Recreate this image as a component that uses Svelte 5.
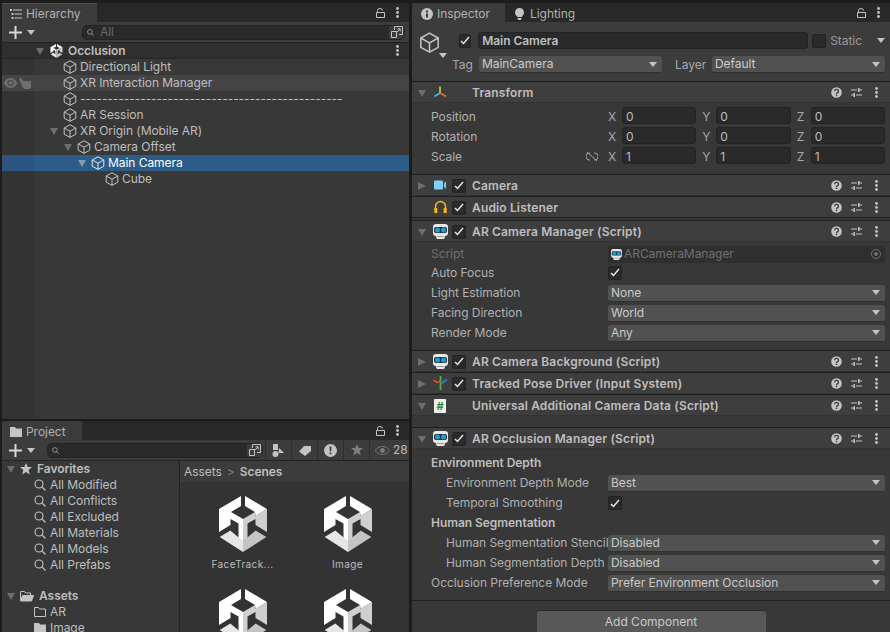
<script>
	const tree = [
		{ name: 'Directional Light', depth: 0 },
		{ name: 'XR Interaction Manager', depth: 0, hover: true },
		{ name: '------------------------------------------------', depth: 0 },
		{ name: 'AR Session', depth: 0 },
		{ name: 'XR Origin (Mobile AR)', depth: 0, open: true },
		{ name: 'Camera Offset', depth: 1, open: true },
		{ name: 'Main Camera', depth: 2, open: true, selected: true },
		{ name: 'Cube', depth: 3 }
	];
	const favorites = ['All Modified', 'All Conflicts', 'All Excluded', 'All Materials', 'All Models', 'All Prefabs'];
	const scenes = ['FaceTrack...', 'Image', '', ''];
	const vectors = [
		{ label: 'Position', value: '0' },
		{ label: 'Rotation', value: '0' },
		{ label: 'Scale', value: '1', link: true }
	];
</script>

{#snippet cube(size = 14, color = '#c4c4c4')}
	<svg class="ico" width={size} height={size} viewBox="0 0 14 14" fill="none" stroke={color} stroke-width="1">
		<path d="M7 .8 12.8 4v6.2L7 13.4 1.2 10.2V4Z M1.2 4 7 7.2 12.8 4 M7 7.2v6.2" />
	</svg>
{/snippet}

{#snippet unity(w = 48, h = 56)}
	<svg class="ico" width={w} height={h} viewBox="0 0 48 56">
		<path fill="#fff" d="M22 0v10l-10 6 12 7v22h-4.500V27.500L11.500 23v6L0 36V13Z" />
		<path fill="#fff" d="M26 0 48 13 36.500 20 36 16 26 10Z" />
		<path fill="#cfcfcf" d="M48 13v23l-11.500-7v-6l-8 4.500V45H24V23l12-7v4Z" />
		<path fill="#e6e6e6" d="M.7 41 11.300 34.500 24 45v11Z" />
		<path fill="#c4c4c4" d="M47.300 41 36.700 34.500 24 45v11Z" />
	</svg>
{/snippet}

{#snippet triangle(open = true, color = '#6e6e6e')}
	<svg class="ico" width="8" height="8" viewBox="0 0 8 8" fill={color}>
		{#if open}<path d="M0 1h8L4 8Z" />{:else}<path d="M0 0l8 4-8 4Z" />{/if}
	</svg>
{/snippet}

{#snippet caret()}
	<svg class="ico" width="8" height="5" viewBox="0 0 8 5" fill="#c4c4c4"><path d="M0 0h8L4 5Z" /></svg>
{/snippet}

{#snippet lock()}
	<svg class="ico" width="9" height="10" viewBox="0 0 9 10" fill="none" stroke="#c4c4c4"><path d="M1.500 4.500V2.500a2.500 2 0 0 1 5 0 M.5 4.500h8v5h-8Z" /></svg>
{/snippet}

{#snippet dots()}
	<svg class="ico" width="3" height="11" viewBox="0 0 3 11" fill="#c4c4c4"><circle cx="1.500" cy="1.500" r="1.400" /><circle cx="1.500" cy="5.500" r="1.400" /><circle cx="1.500" cy="9.500" r="1.400" /></svg>
{/snippet}

{#snippet plusBtn()}
	<div class="plus">
		<svg class="ico" width="13" height="13" viewBox="0 0 13 13" fill="#d8d8d8"><path d="M5.500 0h2v5.500H13v2H7.500V13h-2V7.500H0v-2h5.500Z" /></svg>
		{@render caret()}
	</div>
{/snippet}

{#snippet glass(size = 12, color = '#c4c4c4')}
	<svg class="ico" width={size} height={size} viewBox="0 0 12 12" fill="none" stroke={color} stroke-width="1.100"><circle cx="5" cy="5" r="4" /><path d="M8 8l3.500 3.500" /></svg>
{/snippet}

{#snippet searchEnd()}
	<span class="search-end">
		<svg class="ico" width="12" height="12" viewBox="0 0 12 12" fill="none" stroke="#c4c4c4"><path d="M3.500 4V.5h8v8H8 M.5 5.500h5v6h-5Z M5 7l4-4 M6.500 2.800H9.200V5.500" /></svg>
	</span>
{/snippet}

{#snippet check()}
	<span class="check">
		<svg class="ico" width="10" height="9" viewBox="0 0 10 9" fill="none" stroke="#e6e6e6" stroke-width="1.500"><path d="M1 5l2.500 2.500L9 1" /></svg>
	</span>
{/snippet}

{#snippet robot(size = 15)}
	<svg class="ico" width={size} height={size} viewBox="0 0 15 15">
		<path fill="#e8e8e8" d="M3 0h9a3 3 0 0 1 3 3v6a3 3 0 0 1-3 3v1l-1 2H4l-1-2v-1a3 3 0 0 1-3-3V3a3 3 0 0 1 3-3Z" />
		<rect fill="#26323a" x="1" y="3" width="13" height="6" rx="2" />
		<circle fill="#18a0d8" cx="4.500" cy="6" r="2.500" />
		<circle fill="#18a0d8" cx="10.500" cy="6" r="2.500" />
		<path fill="#9a9a9a" d="M4 12h7v1H4Z" />
	</svg>
{/snippet}

{#snippet dropdown(value)}
	<div class="dropdown"><span>{value}</span>{@render caret()}</div>
{/snippet}

{#snippet compHead(title, open, icon, toggle = true, showArrow = true, tight = false)}
	<div class="comp-head" class:tight>
		<span class="arrow">{#if showArrow}{@render triangle(open)}{/if}</span>
		<span class="comp-icon">{@render icon()}</span>
		<span class="comp-check">{#if toggle}{@render check()}{/if}</span>
		<span class="comp-title">{title}</span>
		<span class="comp-tools">
			<svg class="ico" width="11" height="11" viewBox="0 0 11 11"><circle cx="5.500" cy="5.500" r="5.300" fill="#c4c4c4" /><path d="M3.500 4.200a2 1.800 0 1 1 2.800 1.700c-.6.300-.8.600-.8 1.100" fill="none" stroke="#383838" stroke-width="1.300" /><rect x="4.800" y="7.700" width="1.400" height="1.400" fill="#383838" /></svg>
			<svg class="ico sliders" width="11" height="11" viewBox="0 0 11 11" fill="#c4c4c4"><path d="M0 2.500h6v1H0Z M7 1h1.500v1.500H11v1H8.500V5H7Z M0 7.500h2.500V6H4v4H2.500V8.500H0Z M5 7.500h6v1H5Z" /></svg>
			{@render dots()}
		</span>
	</div>
{/snippet}

{#snippet iconTransform()}
	<svg class="ico" width="15" height="15" viewBox="0 0 15 15" fill="none" stroke-width="1.800"><path d="M7 8V1.500" stroke="#a6d32a" /><path d="M7 8 1.500 11.500" stroke="#3fb6e8" /><path d="M7 8l6 3.500" stroke="#f2673a" /></svg>
{/snippet}
{#snippet iconCamera()}
	<svg class="ico" width="15" height="15" viewBox="0 0 15 15" fill="#7fd0fb"><rect x="1" y="2.500" width="9" height="9" rx="1" /><path d="M11 5.500 13 3v8l-2-2.500Z" /></svg>
{/snippet}
{#snippet iconAudio()}
	<svg class="ico" width="15" height="15" viewBox="0 0 15 15" fill="none" stroke="#f7b51b" stroke-width="1.500"><path d="M2.500 9V6.500a5 5 0 0 1 10 0V9" /><path d="M2.800 8v5 M12.200 8v5" stroke-width="3" /></svg>
{/snippet}
{#snippet iconPose()}
	<svg class="ico" width="15" height="15" viewBox="0 0 15 15" fill="none" stroke-width="1.700"><path d="M7.500 0v14" stroke="#4cb82c" /><path d="M.5 4 4 6.500 7.500 5" stroke="#f0402c" /><path d="M7.500 8 14 3.500" stroke="#2a84e8" /></svg>
{/snippet}
{#snippet iconHash()}
	<span class="hash-doc">#</span>
{/snippet}
{#snippet iconRobot()}
	{@render robot()}
{/snippet}

<div class="editor">
	<div class="left">
		<section class="panel hierarchy">
			<div class="tabs">
				<div class="tab active blue">
					<svg class="ico" width="12" height="10" viewBox="0 0 12 10" fill="#c4c4c4"><path d="M0 0h2v2H0Z M3 .5h9v1H3Z M1.500 4h2v2h-2Z M4.500 4.500H12v1H4.500Z M1.500 8h2v2h-2Z M4.500 8.500H12v1H4.500Z" /></svg>
					<span>Hierarchy</span>
				</div>
				<div class="tab-tools">{@render lock()}{@render dots()}</div>
			</div>
			<div class="toolbar">
				{@render plusBtn()}
				<div class="search wide">
					<span class="search-glass">{@render glass(7)}</span>
					<span class="hint">All</span>
					{@render searchEnd()}
				</div>
			</div>
			<div class="scene-row">
				<span class="scene-arrow">{@render triangle(true)}</span>
				{@render unity(13, 14)}
				<b>Occlusion</b>
				<span class="scene-dots">{@render dots()}</span>
			</div>
			<div class="tree">
				{#each tree as row}
					<div class="tree-row" class:selected={row.selected} class:hover={row.hover}>
						<span class="gutter">
							{#if row.hover}
								<svg class="ico" width="15" height="10" viewBox="0 0 15 10"><path fill="#6e6e6e" d="M.5 5C3 1 5 0 7.500 0S12 1 14.500 5C12 9 10 10 7.500 10S3 9 .5 5Z" /><circle cx="7.500" cy="5" r="3" fill="#444" /><circle cx="7.500" cy="5" r="2" fill="#6e6e6e" /></svg>
								<svg class="ico" width="12" height="11" viewBox="0 0 12 11" fill="#6e6e6e"><path d="M0 0h1.500l3 3H11a1 1 0 0 1 1 1v5l-1 2H5L3 8 .5 2Z" /></svg>
							{/if}
						</span>
						<span class="tree-arrow" style="margin-left:{16 + row.depth * 14}px">
							{#if row.open}{@render triangle(true, row.selected ? '#7f9cb8' : '#6e6e6e')}{/if}
						</span>
						{@render cube(14, row.selected ? '#e0e8ee' : '#c4c4c4')}
						<span class="tree-name">{row.name}</span>
					</div>
				{/each}
			</div>
		</section>

		<section class="panel project">
			<div class="tabs">
				<div class="tab active">
					<svg class="ico" width="12" height="10" viewBox="0 0 12 10" fill="#c4c4c4"><path d="M0 0h5l1 1.500h6V10H0Z" /></svg>
					<span>Project</span>
				</div>
				<div class="tab-tools">{@render lock()}{@render dots()}</div>
			</div>
			<div class="toolbar">
				{@render plusBtn()}
				<div class="search narrow">
					<span class="search-glass">{@render glass(7)}</span>
					{@render searchEnd()}
				</div>
				<div class="tool-btn">
					<svg class="ico" width="13" height="13" viewBox="0 0 13 13" fill="#c4c4c4"><rect x="1" y="0" width="5" height="6" /><circle cx="3.500" cy="10" r="3" /><path d="M7 4l5 5H6.500Z" /></svg>
				</div>
				<div class="tool-btn">
					<svg class="ico" width="12" height="11" viewBox="0 0 12 11" fill="#c4c4c4"><path d="M5 1h7v5L6 11 0 6.500Z" /></svg>
				</div>
				<div class="tool-btn">
					<svg class="ico" width="13" height="13" viewBox="0 0 13 13"><circle cx="6.500" cy="6.500" r="6.500" fill="#c4c4c4" /><path d="M5.500 2.500h2l-.3 5h-1.400Z M5.600 8.500h1.800v1.800H5.600Z" fill="#3c3c3c" /></svg>
				</div>
				<div class="tool-btn">
					<svg class="ico" width="12" height="12" viewBox="0 0 12 12" fill="#7d7d7d"><path d="M6 0l1.700 4H12L8.600 7l1.200 4.500L6 9l-3.800 2.500L3.400 7 0 4h4.300Z" /></svg>
				</div>
				<div class="tool-count">
					<svg class="ico" width="15" height="9" viewBox="0 0 15 9" fill="none" stroke="#7d7d7d"><path d="M.5 4.500C3 1 5 .5 7.500.5S12 1 14.500 4.500C12 8 10 8.500 7.500 8.500S3 8 .5 4.500Z" /><circle cx="7.500" cy="4.500" r="2" fill="#7d7d7d" /></svg>
					<span>28</span>
				</div>
			</div>
			<div class="project-body">
				<div class="folders">
					<div class="fold-head first">
						{@render triangle(true)}
						<svg class="ico" width="12" height="12" viewBox="0 0 12 12" fill="#c4c4c4"><path d="M6 0l1.700 4H12L8.600 7l1.200 4.500L6 9l-3.800 2.500L3.400 7 0 4h4.300Z" /></svg>
						<b>Favorites</b>
					</div>
					{#each favorites as fav}
						<div class="fold-item">{@render glass()}<span>{fav}</span></div>
					{/each}
					<div class="fold-head assets">
						{@render triangle(true)}
						<svg class="ico" width="14" height="11" viewBox="0 0 14 11" fill="none" stroke="#c4c4c4"><path d="M.5 10V.5h4l1 1.500h5v2" /><path d="M.5 10l2-5.500H13.500l-2 5.500Z" fill="#c4c4c4" /></svg>
						<b>Assets</b>
					</div>
					<div class="fold-item">
						<svg class="ico" width="12" height="10" viewBox="0 0 12 10" fill="none" stroke="#c4c4c4"><path d="M.5.500h4l1 1.500h6v7.500H.5Z" /></svg>
						<span>AR</span>
					</div>
					<div class="fold-item">
						<svg class="ico" width="12" height="10" viewBox="0 0 12 10" fill="#c4c4c4"><path d="M0 0h5l1 1.500h6V10H0Z" /></svg>
						<span>Image</span>
					</div>
				</div>
				<div class="browser">
					<div class="crumbs"><span>Assets</span><i>&gt;</i><b>Scenes</b></div>
					<div class="assets-grid">
						{#each scenes as scene}
							<div class="asset">
								{@render unity()}
								<span>{scene}</span>
							</div>
						{/each}
					</div>
				</div>
			</div>
		</section>
	</div>

	<section class="panel inspector">
		<div class="tabs">
			<div class="tab active insp">
				<svg class="ico" width="12" height="12" viewBox="0 0 12 12"><circle cx="6" cy="6" r="6" fill="#c4c4c4" /><path d="M5 2.500h2v2H5Z M5 5.500h2v4H5Z" fill="#3c3c3c" /></svg>
				<span>Inspector</span>
			</div>
			<div class="tab light">
				<svg class="ico" width="9" height="12" viewBox="0 0 9 12" fill="#c4c4c4"><path d="M4.500 0a4.500 4.500 0 0 1 2.500 8.200V9H2v-.8A4.500 4.500 0 0 1 4.500 0Z M2.500 10h4v1l-1 1h-2l-1-1Z" /></svg>
				<span>Lighting</span>
			</div>
			<div class="tab-tools">{@render lock()}{@render dots()}</div>
		</div>

		<div class="go-head">
			<div class="go-icon">
				{@render cube(21, '#c4c4c4')}
				<span class="go-caret">{@render caret()}</span>
			</div>
			<div class="go-fields">
				<div class="go-line first">
					{@render check()}
					<div class="name-field">Main Camera</div>
					<span class="check empty"></span>
					<span class="static">Static</span>
					{@render caret()}
				</div>
				<div class="go-line">
					<span class="tag-label">Tag</span>
					<div class="tag-drop">{@render dropdown('MainCamera')}</div>
					<span class="layer-label">Layer</span>
					{@render dropdown('Default')}
				</div>
			</div>
		</div>

		<div class="comp">
			{@render compHead('Transform', true, iconTransform, false)}
			<div class="comp-body">
				{#each vectors as v}
					<div class="prop">
						<label>{v.label}
							{#if v.link}
								<svg class="ico link" width="12" height="9" viewBox="0 0 12 9" fill="none" stroke="#a0a0a0"><path d="M4 1H3a2.500 3 0 0 0 0 7h1 M8 1h1a2.500 3 0 0 1 0 7H8 M1 0l10 9" /></svg>
							{/if}
						</label>
						<div class="vec">
							{#each ['X', 'Y', 'Z'] as axis}
								<div class="vec-cell"><span>{axis}</span><div class="input">{v.value}</div></div>
							{/each}
						</div>
					</div>
				{/each}
			</div>
		</div>

		<div class="comp">{@render compHead('Camera', false, iconCamera)}</div>
		<div class="comp">{@render compHead('Audio Listener', false, iconAudio, true, false, true)}</div>
		<div class="comp-gap"></div>

		<div class="comp">
			{@render compHead('AR Camera Manager (Script)', true, iconRobot)}
			<div class="comp-body close">
				<div class="prop dim">
					<label>Script</label>
					<div class="object-field">
						{@render robot(11)}
						<span>ARCameraManager</span>
						<svg class="ico target" width="10" height="10" viewBox="0 0 10 10" fill="none" stroke="#707070"><circle cx="5" cy="5" r="4.500" /><circle cx="5" cy="5" r="1.500" fill="#707070" /></svg>
					</div>
				</div>
				<div class="prop short"><label>Auto Focus</label><div>{@render check()}</div></div>
				<div class="prop"><label>Light Estimation</label>{@render dropdown('None')}</div>
				<div class="prop"><label>Facing Direction</label>{@render dropdown('World')}</div>
				<div class="prop"><label>Render Mode</label>{@render dropdown('Any')}</div>
			</div>
		</div>

		<div class="comp">{@render compHead('AR Camera Background (Script)', false, iconRobot)}</div>
		<div class="comp">{@render compHead('Tracked Pose Driver (Input System)', false, iconPose)}</div>
		<div class="comp">
			{@render compHead('Universal Additional Camera Data (Script)', true, iconHash, false)}
			<div class="comp-empty"></div>
		</div>

		<div class="comp">
			{@render compHead('AR Occlusion Manager (Script)', true, iconRobot)}
			<div class="comp-body">
				<div class="prop"><label class="strong">Environment Depth</label></div>
				<div class="prop"><label class="sub">Environment Depth Mode</label>{@render dropdown('Best')}</div>
				<div class="prop"><label class="sub">Temporal Smoothing</label><div>{@render check()}</div></div>
				<div class="prop"><label class="strong">Human Segmentation</label></div>
				<div class="prop"><label class="sub">Human Segmentation Stencil</label>{@render dropdown('Disabled')}</div>
				<div class="prop"><label class="sub">Human Segmentation Depth</label>{@render dropdown('Disabled')}</div>
				<div class="prop"><label>Occlusion Preference Mode</label>{@render dropdown('Prefer Environment Occlusion')}</div>
			</div>
		</div>

		<div class="add-wrap"><button class="add">Add Component</button></div>
	</section>
</div>

<style>
	:global(body) {
		margin: 0;
		background: #1c1c1c;
	}

	.editor {
		width: 890px;
		height: 632px;
		overflow: hidden;
		display: flex;
		gap: 3px;
		padding: 3px 0 0 2px;
		box-sizing: border-box;
		font-family: Inter, 'Liberation Sans', sans-serif;
		font-size: 12px;
		line-height: 16px;
		letter-spacing: -0.05px;
		color: #bebebe;
	}

	.ico {
		display: block;
		flex: none;
	}

	.left {
		width: 407px;
		display: flex;
		flex-direction: column;
		gap: 2px;
		flex: none;
	}

	.panel {
		display: flex;
		flex-direction: column;
		overflow: hidden;
		background: #383838;
	}

	.hierarchy {
		height: 416px;
		flex: none;
	}

	.project {
		flex: 1;
		min-height: 0;
	}

	.inspector {
		flex: 1;
		min-width: 0;
	}

	/* tabs */
	.tabs {
		height: 19px;
		flex: none;
		display: flex;
		background: #282828;
	}

	.tab {
		display: flex;
		align-items: center;
		gap: 4px;
		padding: 2px 8px 0 8px;
		box-sizing: border-box;
		color: #b0b0b0;
	}

	.tab.active {
		background: #3c3c3c;
	}

	.tab.blue {
		border-top: 1px solid #2c5d87;
		width: 95px;
		padding-top: 1px;
	}

	.project .tab {
		width: 80px;
		border-radius: 2px 2px 0 0;
	}

	.tab.insp {
		width: 93px;
		padding-left: 9px;
	}

	.tab.light {
		padding-left: 10px;
		gap: 6px;
	}

	.tab-tools {
		margin-left: auto;
		display: flex;
		align-items: center;
		gap: 11px;
		padding-right: 10px;
	}

	/* toolbars */
	.toolbar {
		height: 20px;
		flex: none;
		display: flex;
		align-items: center;
		background: #3c3c3c;
		border-bottom: 1px solid #232323;
	}

	.plus {
		display: flex;
		align-items: center;
		gap: 5px;
		padding-left: 7px;
		width: 41px;
		flex: none;
	}

	.search {
		height: 15px;
		display: flex;
		align-items: center;
		background: #2a2a2a;
		border-radius: 5px;
		box-sizing: border-box;
		border: 1px solid #232323;
		flex: none;
	}

	.search.wide {
		width: 323px;
		margin-left: 32px;
	}

	.search.narrow {
		width: 216px;
		margin-left: -3px;
	}

	.search-glass {
		margin-left: 4px;
	}

	.hint {
		margin-left: 6px;
		color: #6a6a6a;
	}

	.search-end {
		margin-left: auto;
		width: 15px;
		height: 13px;
		display: flex;
		align-items: center;
		justify-content: center;
		background: #3c3c3c;
		border-radius: 0 4px 4px 0;
	}

	.tool-btn {
		width: 26px;
		height: 20px;
		display: flex;
		align-items: center;
		justify-content: center;
		border-left: 1px solid #2e2e2e;
		box-sizing: border-box;
		flex: none;
	}

	.search.narrow + .tool-btn {
		margin-left: 2px;
	}

	.tool-count {
		height: 20px;
		flex: 1;
		display: flex;
		align-items: center;
		gap: 3px;
		padding-left: 5px;
		border-left: 1px solid #2e2e2e;
	}

	/* hierarchy tree */
	.scene-row {
		height: 16px;
		flex: none;
		display: flex;
		align-items: center;
		box-sizing: border-box;
		background: #2f2f2f;
		border-bottom: 1px solid #262626;
	}

	.scene-row b {
		margin-left: 5px;
		font-weight: 600;
	}

	.scene-arrow {
		margin: 0 6px 0 34px;
	}

	.scene-dots {
		margin-left: auto;
		padding-right: 10px;
	}

	.tree {
		flex: 1;
		background: linear-gradient(to right, #333333 32px, #383838 32px);
	}

	.tree-row {
		height: 16px;
		display: flex;
		align-items: center;
	}

	.tree-row.hover {
		background: #444444;
	}

	.tree-row.selected {
		background: #2c5d87;
		color: #ffffff;
	}

	.gutter {
		width: 32px;
		height: 16px;
		flex: none;
		display: flex;
		align-items: center;
		gap: 1px;
		padding-left: 1px;
		box-sizing: border-box;
	}

	.tree-row.selected .gutter {
		background: #2b5580;
	}

	.tree-arrow {
		width: 8px;
		margin-right: 5px;
		flex: none;
	}

	.tree-name {
		margin-left: 3px;
		white-space: nowrap;
	}

	/* project window */
	.project-body {
		flex: 1;
		min-height: 0;
		display: flex;
		overflow: hidden;
	}

	.folders {
		width: 177px;
		flex: none;
		border-right: 1px solid #232323;
	}

	.fold-head {
		height: 16px;
		display: flex;
		align-items: center;
		gap: 5px;
		padding-left: 5px;
	}

	.fold-head b {
		font-weight: 600;
	}

	.fold-head.assets {
		margin-top: 15px;
	}

	.fold-item {
		height: 16px;
		display: flex;
		align-items: center;
		gap: 4px;
		padding-left: 32px;
	}

	.browser {
		flex: 1;
		min-width: 0;
		display: flex;
		flex-direction: column;
		background: #333333;
	}

	.crumbs {
		height: 21px;
		flex: none;
		display: flex;
		align-items: center;
		gap: 5px;
		padding-left: 4px;
		background: #3c3c3c;
	}

	.crumbs i {
		font-style: normal;
		color: #808080;
	}

	.crumbs b {
		font-weight: 600;
	}

	.assets-grid {
		display: grid;
		grid-template-columns: 105px 105px;
		grid-auto-rows: 93px;
		padding: 14px 0 0 10px;
	}

	.asset {
		display: flex;
		flex-direction: column;
		align-items: center;
		gap: 4px;
		font-size: 10px;
		letter-spacing: 0.4px;
		line-height: 16px;
	}

	/* inspector */
	.go-head {
		height: 59px;
		flex: none;
		display: flex;
		padding: 0 5px 0 7px;
		background: #3c3c3c;
		box-sizing: border-box;
	}

	.go-icon {
		width: 33px;
		flex: none;
		padding-top: 10px;
		position: relative;
	}

	.go-caret {
		position: absolute;
		left: 20px;
		top: 31px;
	}

	.go-fields {
		flex: 1;
		min-width: 0;
	}

	.go-line {
		display: flex;
		align-items: center;
		height: 17px;
	}

	.go-line.first {
		margin-top: 10px;
		margin-bottom: 7px;
		padding-left: 7px;
	}

	.name-field {
		width: 330px;
		height: 17px;
		flex: none;
		margin-left: 7px;
		margin-right: 4px;
		padding-left: 3px;
		box-sizing: border-box;
		background: #2a2a2a;
		border: 1px solid #232323;
		border-radius: 3px;
		font-weight: 600;
		line-height: 15px;
	}

	.check.empty {
		flex: none;
	}

	.static {
		margin-left: 4px;
		margin-right: 15px;
		color: #9a9a9a;
	}

	.tag-label {
		width: 27px;
		flex: none;
		color: #a8a8a8;
	}

	.tag-drop {
		width: 183px;
		flex: none;
	}

	.layer-label {
		width: 37px;
		margin-left: 13px;
		flex: none;
		color: #a8a8a8;
	}

	.go-line > .dropdown {
		flex: 1;
	}

	.comp {
		flex: none;
		border-top: 1px solid #1f1f1f;
	}

	.comp-gap {
		height: 3px;
		flex: none;
		border-top: 1px solid #1f1f1f;
		box-sizing: border-box;
	}

	.comp-head {
		height: 21px;
		display: flex;
		align-items: center;
		padding: 1px 0 0 6px;
		background: #3e3e3e;
		box-sizing: border-box;
		font-weight: 600;
		border-bottom: 1px solid #333333;
	}

	.comp-head.tight {
		height: 20px;
		border-bottom: none;
	}

	.arrow {
		width: 8px;
		margin-right: 7px;
		flex: none;
	}

	.comp-icon {
		width: 15px;
		margin-right: 4px;
		flex: none;
	}

	.comp-check {
		width: 14px;
		margin-right: 6px;
		flex: none;
	}

	.comp-title {
		white-space: nowrap;
		letter-spacing: 0.15px;
	}

	.comp-tools {
		margin-left: auto;
		display: flex;
		align-items: center;
		gap: 9px;
		padding-right: 12px;
	}

	.sliders {
		margin-right: 4px;
	}

	.hash-doc {
		display: block;
		width: 12px;
		height: 14px;
		margin-left: 1px;
		background: #f0f0f0;
		border-radius: 1px;
		color: #1f8a3a;
		font-size: 11px;
		line-height: 14px;
		font-weight: 700;
		text-align: center;
	}

	.check {
		width: 14px;
		height: 14px;
		display: flex;
		align-items: center;
		justify-content: center;
		background: #2a2a2a;
		border: 1px solid #232323;
		border-radius: 2px;
		box-sizing: border-box;
	}

	.comp-body {
		padding: 4px 5px 7px 19px;
	}

	.comp-body.close {
		padding-top: 2px;
	}

	.comp-empty {
		height: 11px;
	}

	.prop {
		height: 20px;
		display: grid;
		grid-template-columns: 177px 1fr;
		align-items: center;
	}

	.prop.short {
		height: 17px;
		margin-bottom: 2px;
	}

	.prop label {
		position: relative;
		white-space: nowrap;
		overflow: hidden;
		color: #b0b0b0;
	}

	.prop.dim label {
		color: #707070;
	}

	.prop label.strong {
		font-weight: 600;
		color: #bebebe;
	}

	.prop label.sub {
		padding-left: 15px;
	}

	.link {
		position: absolute;
		right: 10px;
		top: 3px;
	}

	.vec {
		display: grid;
		grid-template-columns: repeat(3, 1fr);
		gap: 6px;
		height: 20px;
	}

	.vec-cell {
		display: flex;
		align-items: flex-start;
	}

	.vec-cell span {
		width: 14px;
		flex: none;
		line-height: 20px;
		color: #a8a8a8;
	}

	.input {
		flex: 1;
		height: 17px;
		padding-left: 3px;
		box-sizing: border-box;
		background: #2a2a2a;
		border: 1px solid #232323;
		border-radius: 3px;
		line-height: 17px;
	}

	.dropdown {
		height: 17px;
		display: flex;
		align-items: center;
		justify-content: space-between;
		padding: 0 5px 0 3px;
		background: #515151;
		border-bottom: 1px solid #303030;
		border-radius: 3px;
		box-sizing: border-box;
		color: #cacaca;
	}

	.object-field {
		height: 17px;
		display: flex;
		align-items: center;
		gap: 2px;
		padding-left: 3px;
		background: #2f2f2f;
		border-radius: 3px;
		color: #707070;
	}

	.target {
		margin-left: auto;
		margin-right: 4px;
	}

	.add-wrap {
		flex: 1;
		display: flex;
		justify-content: center;
		padding-top: 9px;
		border-top: 1px solid #1f1f1f;
	}

	.add {
		width: 229px;
		height: 30px;
		flex: none;
		border: none;
		border-top: 1px solid #2a2a2a;
		border-radius: 3px;
		background: #585858;
		color: #cacaca;
		font: inherit;
		padding: 0 0 8px;
	}
</style>
